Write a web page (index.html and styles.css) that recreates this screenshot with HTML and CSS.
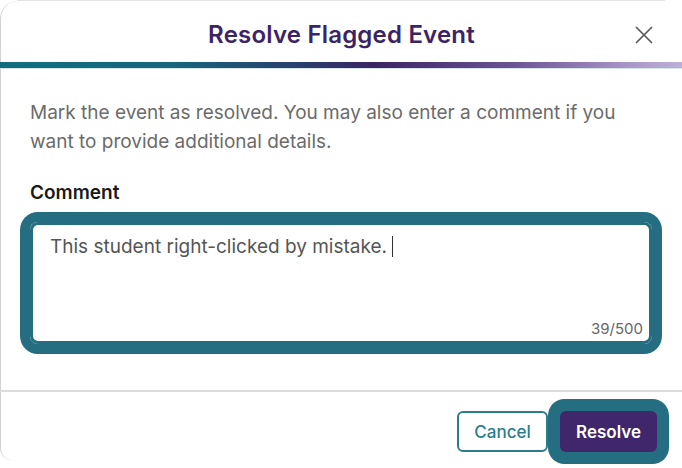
FILE: index.html
```html
<!DOCTYPE html>
<html lang="en">
<head>
    <meta charset="UTF-8">
    <meta name="viewport" content="width=device-width, initial-scale=1.0">
    <title>Resolve Flagged Event</title>
    <link rel="stylesheet" href="styles.css">
</head>
<body>
    <div class="backdrop-edge"></div>
    <div class="dialog">
        <div class="dialog-header">
            <span></span>
            <h1>Resolve Flagged Event</h1>
            <button class="close-btn" aria-label="Close">
                <svg width="20" height="20" viewBox="0 0 20 20">
                    <path d="M2 2 L18 18 M18 2 L2 18" stroke="#5a5a5a" stroke-width="1.7" fill="none"/>
                </svg>
            </button>
        </div>
        <div class="accent-bar"></div>

        <div class="dialog-body">
            <p class="description">Mark the event as resolved. You may also enter a comment if you want to provide additional details.</p>
            <label class="field-label">Comment</label>
            <div class="comment-box">
                <div class="comment-text">This student right-clicked by mistake. <span class="caret"></span></div>
                <div class="counter">39/500</div>
            </div>
        </div>

        <div class="dialog-footer">
            <button class="btn btn-outline">Cancel</button>
            <button class="btn btn-primary">Resolve</button>
        </div>
    </div>
</body>
</html>
```

FILE: styles.css
```css
* {
    margin: 0;
    padding: 0;
    box-sizing: border-box;
}
body {
    font-family: Inter, "Noto Sans", sans-serif;
    background: #fff;
    color: #1d1d1f;
    width: 682px;
    height: 468px;
    overflow: hidden;
}

/* faint edge of the page behind the dialog */
.backdrop-edge {
    height: 1px;
    margin: 0 17px;
    background: #e4e4e4;
}

.dialog {
    border-left: 1px solid #d2d2d2;
    border-top-left-radius: 18px;
    border-bottom-left-radius: 12px;
    height: 459px;
}

.dialog-header {
    display: grid;
    grid-template-columns: 1fr auto 1fr;
    align-items: center;
    padding: 18px 0 11px;
}
.dialog-header h1 {
    font-size: 24px;
    line-height: 32px;
    font-weight: 600;
    color: #3b2466;
    letter-spacing: 0.2px;
}
.close-btn {
    justify-self: end;
    margin-right: 28px;
    width: 20px;
    height: 20px;
    border: none;
    background: none;
    display: flex;
}

.accent-bar {
    height: 6px;
    margin-left: -1px;
    background: linear-gradient(90deg, #0f6e7d 0%, #17667c 25%, #293f6c 44%, #3b2563 55%, #6a5394 75%, #a796c6 92%, #bcb0d6 100%);
    box-shadow: 0 1px 0 #d8e6ea;
}

.dialog-body {
    padding: 30px 30px 0 29px;
}
.description {
    font-size: 19px;
    line-height: 29px;
    color: #6b6b6b;
}
.field-label {
    display: block;
    margin-top: 25px;
    font-size: 19px;
    line-height: 24px;
    font-weight: 600;
    color: #1a1a1a;
}

.comment-box {
    margin-top: 17px;
    height: 122px;
    border: 3px solid #256d81;
    border-radius: 8px;
    box-shadow: 0 0 0 10px #256d81;
    padding: 10px 6px 3px 17px;
    display: flex;
    flex-direction: column;
}
.comment-text {
    font-size: 19px;
    line-height: 24px;
    color: #555;
}
.caret {
    display: inline-block;
    width: 1px;
    height: 21px;
    background: #333;
    vertical-align: -4px;
}
.counter {
    margin-top: auto;
    align-self: flex-end;
    font-size: 15px;
    line-height: 18px;
    color: #666;
}

.dialog-footer {
    margin-top: 46px;
    border-top: 2px solid #dcdcdc;
    margin-left: -1px;
    display: flex;
    justify-content: flex-end;
    gap: 12px;
    padding: 19px 25px 0 0;
}
.btn {
    height: 41px;
    border-radius: 6px;
    font-family: Inter, "Noto Sans", sans-serif;
    font-size: 17px;
    cursor: pointer;
}
.btn-outline {
    width: 91px;
    background: #fff;
    border: 2px solid #2a7d90;
    color: #2a7d90;
    font-weight: 500;
}
.btn-primary {
    width: 97px;
    background: #40266a;
    border: none;
    color: #fff;
    font-weight: 600;
    box-shadow: 0 0 0 12px #256d81;
}
```
